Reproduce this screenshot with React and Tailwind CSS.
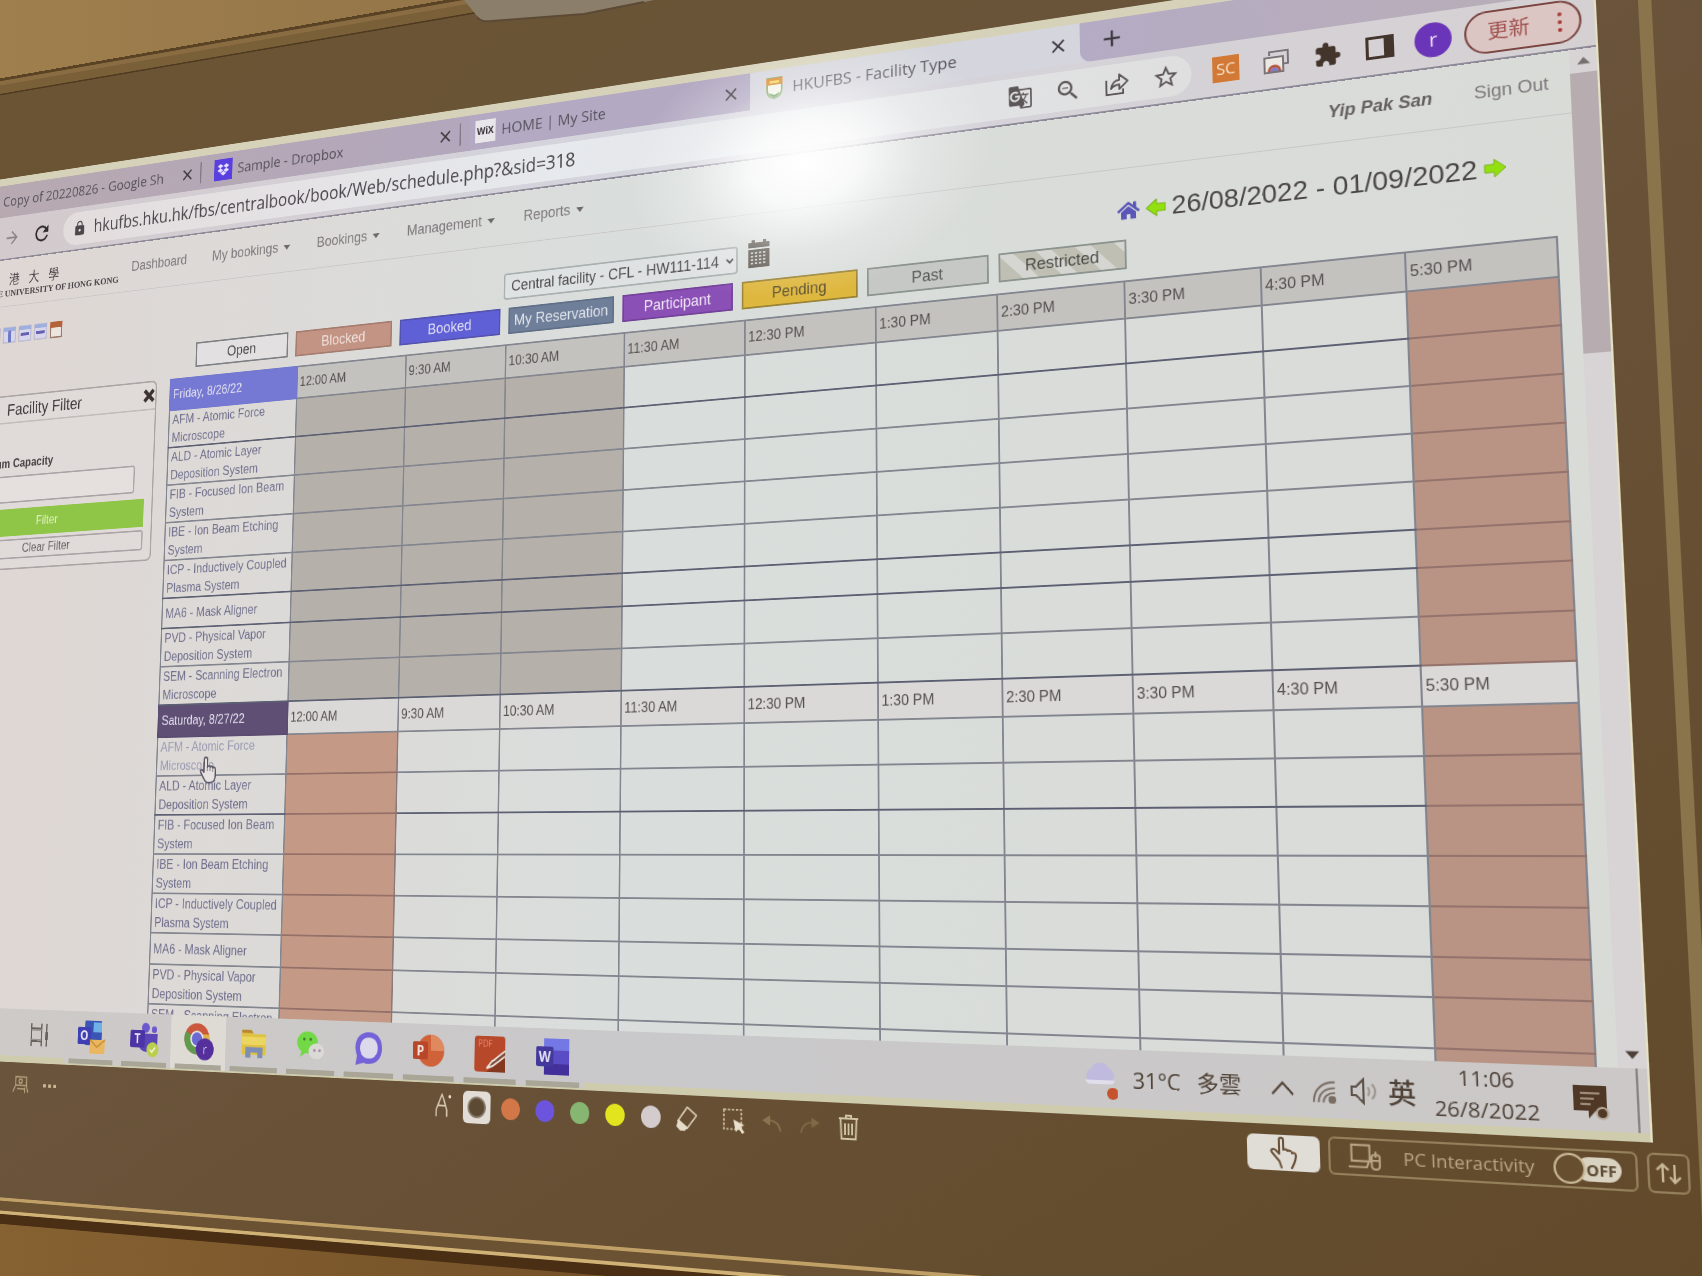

import React, { useEffect, useState } from "react";
import { MdLock, MdRefresh, MdArrowForward, MdArrowBack, MdGTranslate, MdZoomOut, MdStarBorder, MdExtension, MdClose, MdAdd } from "react-icons/md";
import { FaHome, FaDropbox } from "react-icons/fa";
import { Search } from "lucide-react";

const DESIGN_WIDTH = 1702;
const TILT =
  "matrix3d(0.571740, -0.1109137, 0, -0.000130944, -0.0331028, 0.7001262, 0, -0.0000427835, 0, 0, 1, 0, -56.2354, 88.3242, 0, 1)";

function useScale() {
  const [k, setK] = useState(window.innerWidth / DESIGN_WIDTH);
  useEffect(() => {
    const onResize = () => setK(window.innerWidth / DESIGN_WIDTH);
    window.addEventListener("resize", onResize);
    return () => window.removeEventListener("resize", onResize);
  }, []);
  return k;
}

/* ---------- Browser chrome ---------- */

function CrestIcon() {
  return (
    <svg viewBox="0 0 24 28" className="h-7 w-6">
      <path d="M3 2h18v14c0 6-5 9-9 10-4-1-9-4-9-10z" fill="#f1f3e6" stroke="#8aa66c" strokeWidth="2" />
      <path d="M2 2h20v8H2z" fill="#d98a2b" />
      <path d="M6 5h12v3H6z" fill="#f2d35a" />
      <path d="M5 19c2 4 5 5 7 6 2-1 5-2 7-6l-7 3z" fill="#5f9a58" />
    </svg>
  );
}

function Tab({ icon, title, look, divider }) {
  return (
    <div className={"flex items-center pr-3 " + look}>
      <span className="flex w-7 shrink-0 items-center justify-center">{icon}</span>
      <span className="ml-2 whitespace-nowrap">{title}</span>
      <button aria-label={"Close " + title} className="ml-auto text-[#3f3a40]">
        <MdClose size={24} />
      </button>
      {divider && <span className="ml-2 h-7 w-[2px] bg-[#857a86]" />}
    </div>
  );
}

function TabStrip() {
  return (
    <div className="flex h-[54px] items-stretch border-t-[10px] border-[#d6d2ba] bg-gradient-to-r from-[#b8a9af] via-[#b0a6c0] to-[#b9aeb8] text-[19px] text-[#57525c]">
      <Tab divider look="w-[400px] pl-7" title="Copy of 20220826 - Google Sh" icon={<span className="h-5 w-4 bg-[#4f9a62]" />} />
      <Tab
        divider
        look="w-[384px] pl-2"
        title="Sample - Dropbox"
        icon={
          <span className="flex h-7 w-7 items-center justify-center bg-[#5a3fe0] text-[#e9e2ff]">
            <FaDropbox size={18} />
          </span>
        }
      />
      <Tab
        look="w-[370px] rounded-br-xl pl-2 bg-[#b3a9c2]"
        title="HOME | My Site"
        icon={<span className="flex h-7 w-7 items-center justify-center bg-[#e9e6ea] text-[12px] font-bold text-[#3a363c]">WiX</span>}
      />
      <Tab look="w-[386px] bg-[#d5d5dd] pl-4" title="HKUFBS - Facility Type" icon={<CrestIcon />} />
      <div className="flex flex-1 items-center bg-[#d5d5dd]">
        <div className="flex h-full w-full items-center rounded-bl-xl bg-gradient-to-r from-[#b5abc4] to-[#b8aeb6] pl-5">
          <button aria-label="New tab" className="text-[#3f3a40]">
            <MdAdd size={30} />
          </button>
        </div>
      </div>
    </div>
  );
}

function ShareIcon() {
  return (
    <svg viewBox="0 0 28 28" className="h-7 w-7" fill="none" stroke="currentColor" strokeWidth="2">
      <path d="M3 9v16h18v-5" />
      <path d="M8 19c1-6 4-9 9-9V4l9 8-9 8v-5c-4 0-7 1-9 4z" strokeLinejoin="round" />
    </svg>
  );
}

function CardsIcon() {
  return (
    <svg viewBox="0 0 28 28" className="h-7 w-7">
      <path d="M7 7V3h19v14h-4" fill="none" stroke="#7a7276" strokeWidth="2" />
      <rect x="2" y="9" width="19" height="16" fill="#ece8e4" stroke="#7a7276" strokeWidth="2" />
      <path d="M5 24a7 7 0 0 1 14 0h-3a4 4 0 0 0-8 0z" fill="#b5563c" />
      <path d="M8 24a4 4 0 0 1 8 0z" fill="#7f7bc4" />
    </svg>
  );
}

function Toolbar() {
  return (
    <div className="flex h-[59px] items-center border-b-2 border-[#8f8a98] bg-gradient-to-r from-[#d2c9cb] via-[#d5d5de] to-[#d5d0d2] pr-3 text-[#4d474c]">
      <button aria-label="Back" className="ml-4 w-7"><MdArrowBack size={28} /></button>
      <button aria-label="Forward" className="ml-6 w-7 text-[#8b8487]"><MdArrowForward size={28} /></button>
      <button aria-label="Reload" className="ml-5 w-8 text-[#2f2a2d]"><MdRefresh size={32} /></button>
      <div className="ml-5 flex h-11 w-[1491px] items-center rounded-full bg-gradient-to-r from-[#e3dcdd] via-[#e6e9ed] to-[#dfdfdf] pl-4 pr-3">
        <MdLock size={22} />
        <input
          aria-label="Address"
          defaultValue="hkufbs.hku.hk/fbs/centralbook/book/Web/schedule.php?&sid=318"
          className="ml-3 min-w-0 flex-1 bg-transparent text-[23px] text-[#4a454a] outline-none"
        />
        <div className="flex gap-6 text-[#5d5659]">
          <button aria-label="Translate"><MdGTranslate size={28} /></button>
          <button aria-label="Zoom"><MdZoomOut size={30} /></button>
          <button aria-label="Share"><ShareIcon /></button>
          <button aria-label="Bookmark"><MdStarBorder size={30} /></button>
        </div>
      </div>
      <div className="ml-[22px] flex items-center gap-6">
        <span className="flex h-7 w-7 items-center justify-center bg-[#d27a35] text-[17px] text-[#f4e3d0]">SC</span>
        <CardsIcon />
        <span className="text-[#43352c]"><MdExtension size={28} /></span>
        <span className="box-border h-6 w-7 border-[3px] border-r-[10px] border-[#43352c]" />
        <span className="-ml-1 flex h-9 w-9 items-center justify-center rounded-full bg-[#6a35b8] text-[20px] text-[#e8dcf4]">r</span>
      </div>
      <button className="ml-3 flex h-11 flex-1 items-center justify-between rounded-full border-2 border-[#7a4440] bg-[#dcc6c4] pl-5 pr-4 text-[20px] text-[#a0524e]">
        更新
        <span className="flex flex-col gap-1">
          <i className="h-1 w-1 rounded-full bg-[#a8403c]" />
          <i className="h-1 w-1 rounded-full bg-[#a8403c]" />
          <i className="h-1 w-1 rounded-full bg-[#a8403c]" />
        </span>
      </button>
    </div>
  );
}

/* ---------- Booking page ---------- */

function SiteNav() {
  const items = ["My bookings", "Bookings", "Management", "Reports"];
  return (
    <nav className="flex h-16 items-center border-b border-[#c8c6c7] text-[18px] text-[#7d787c]">
      <a href="#home" className="flex w-[262px] flex-col items-end pt-2 font-['Liberation_Serif','Noto_Sans_CJK_TC',serif] text-[#4a4448]">
        <span className="mr-[98px] flex gap-[15px] text-[18px] leading-5">
          <span>港</span><span>大</span><span>學</span>
        </span>
        <span className="whitespace-nowrap text-[13px] font-bold leading-4">THE UNIVERSITY OF HONG KONG</span>
      </a>
      <div className="ml-5 flex gap-[39px]">
        <a href="#dashboard">Dashboard</a>
        {items.map((t) => (
          <a key={t} href={"#" + t} className="flex items-center gap-2">
            {t}
            <svg viewBox="0 0 10 6" className="h-[6px] w-[10px]"><path d="M0 0h10L5 6z" fill="#6d686c" /></svg>
          </a>
        ))}
      </div>
      <div className="ml-auto flex gap-10 pr-5">
        <a href="#profile" className="font-bold italic text-[#66615f]">Yip Pak San</a>
        <a href="#signout">Sign Out</a>
      </div>
    </nav>
  );
}

function ViewIcon({ kind }) {
  if (kind === "cal")
    return (
      <svg viewBox="0 0 22 22" className="h-[22px] w-[22px]">
        <rect x="2" y="1" width="18" height="20" fill="#ece4df" stroke="#9a7a68" strokeWidth="2" />
        <path d="M1 0h20v8H1z" fill="#b4623c" />
      </svg>
    );
  return (
    <svg viewBox="0 0 22 22" className="h-[22px] w-[22px]">
      <rect x="1" y="1" width="20" height="20" fill="#d8d6ea" stroke="#a7a6c4" strokeWidth="1" />
      <path d="M1 1h20v5H1z" fill="#9fb0de" />
      {kind === "v" ? <path d="M9 5h5v16H9z" fill="#6f78c4" /> : <path d="M4 10h14v4H4z" fill="#6560b4" />}
    </svg>
  );
}

function Arrow({ flip }) {
  return (
    <svg viewBox="0 0 22 20" className={flip ? "h-5 w-[22px] rotate-180" : "h-5 w-[22px]"}>
      <path d="M1 6h9V1l11 9-11 9v-5H1z" fill="#93e010" stroke="#7ab51a" strokeWidth="1" strokeLinejoin="round" />
    </svg>
  );
}

function CalendarIcon() {
  return (
    <svg viewBox="0 0 28 34" className="h-[34px] w-7" fill="#5d5750">
      <path d="M1 4h4V1h4v3h10V1h4v3h4v6H1z" />
      <path d="M1 12h26v21H1z" />
      <g stroke="#c9cbc5" strokeWidth="2">
        <path d="M4 16h20M4 20h20M4 24h20M4 28h20" strokeDasharray="3 2" />
      </g>
    </svg>
  );
}

const LEGEND = [
  ["Open", "border-[#7e8084] bg-[#e2e0e0] text-[#4c494c]"],
  ["Blocked", "border-[#a57c70] bg-[#c39384] text-[#efe2dc]"],
  ["Booked", "border-[#5553b0] bg-[#5f60d6] text-[#e0e0f2]"],
  ["My Reservation", "border-[#5f6f86] bg-[#6f7f9a] text-[#e0e4ea]"],
  ["Participant", "border-[#74429a] bg-[#8b50b6] text-[#efe4f5]"],
  ["Pending", "border-[#9b8436] bg-[#deb73e] text-[#5c5030]"],
  ["Past", "border-[#8c9490] bg-[#c6c8c5] text-[#5a5a58]"],
  ["Restricted", "border-[#8c9490] bg-[repeating-linear-gradient(45deg,#c0bfb4_0px,#c0bfb4_18px,#d5d6d1_18px,#d5d6d1_30px)] text-[#4c4c48]"],
];

const TIMES = ["12:00 AM", "9:30 AM", "10:30 AM", "11:30 AM", "12:30 PM", "1:30 PM", "2:30 PM", "3:30 PM", "4:30 PM", "5:30 PM"];
const COLS = ["w-[193px]", "w-[157px]", "w-[138px]", "w-[157px]", "w-[152px]", "w-[157px]", "w-[139px]", "w-[139px]", "w-[142px]", "w-[143px]", "w-[143px]"];
const ROOMS = [
  "AFM - Atomic Force Microscope",
  "ALD - Atomic Layer Deposition System",
  "FIB - Focused Ion Beam System",
  "IBE - Ion Beam Etching System",
  "ICP - Inductively Coupled Plasma System",
  "MA6 - Mask Aligner",
  "PVD - Physical Vapor Deposition System",
  "SEM - Scanning Electron Microscope",
];

function HandCursor() {
  return (
    <svg viewBox="0 0 27 36" className="absolute left-[64px] top-[22px] h-9 w-[27px]">
      <path
        d="M9 3c2 0 3 1 3 3v9c1-2 4-2 4 0 1-1 4-1 4 1 1-1 4-1 4 2v8c0 4-2 8-7 8h-4c-3 0-4-2-6-5l-5-8c-1-2 1-4 3-2l2 2V6c0-2 1-3 2-3z"
        fill="#e6e2e2" stroke="#5b5660" strokeWidth="2" strokeLinejoin="round"
      />
      <path d="M12 15v5M16 16v4M20 17v4" stroke="#5b5660" strokeWidth="1" />
    </svg>
  );
}

function Day({ label, tone, headTone, past, blocked, dark, hovered }) {
  return (
    <tbody>
      <tr className="h-10">
        <th scope="row" className={"border-2 px-1 text-left font-normal leading-5 text-[#e3e0ee] " + tone}>{label}</th>
        {TIMES.map((t) => (
          <th key={t} scope="col" className={"border-2 border-[#83868f] px-[3px] text-left font-normal leading-5 text-[#55504f] " + headTone}>{t}</th>
        ))}
      </tr>
      {ROOMS.map((room, r) => {
        const line = dark.includes(r) ? " border-b-[#5c6072]" : "";
        return (
          <tr key={room} className={room.startsWith("MA6") ? "h-[38px]" : "h-12"}>
            <th scope="row" className={"relative border-2 border-[#83868f] px-1 py-0 text-left font-normal leading-[23px]" + line}>
              <a href={"#" + room.slice(0, 3)} className={hovered === r ? "text-[#9a9bb4]" : "text-[#6f6e8c]"}>{room}</a>
              {hovered === r && <HandCursor />}
            </th>
            {TIMES.map((t, c) => {
              const fill = c < past ? " bg-[#b6b0ab]" : blocked.includes(c) ? (c === 0 ? " bg-[#c49985] border-r-[#8a7a7c] border-b-[#947069]" : " bg-[#b99484] border-b-[#94736c]") : "";
              return <td key={t} className={"border-2 border-[#83868f] p-0" + fill + (fill.includes("border-b") ? "" : line)} />;
            })}
          </tr>
        );
      })}
    </tbody>
  );
}

function Schedule() {
  return (
    <table className="w-[1660px] table-fixed border-collapse text-[16px]">
      <colgroup>{COLS.map((c, i) => <col key={i} className={c} />)}</colgroup>
      <Day label="Friday, 8/26/22" tone="border-[#7479cf] bg-[#7579d3]" headTone="bg-[#c3c2bf]" past={3} blocked={[9]} dark={[0, 4, 5, 7]} />
      <Day label="Saturday, 8/27/22" tone="border-[#5b4b70] bg-[#5f4f74]" headTone="bg-[#dad9d7]" past={0} blocked={[0, 9]} dark={[1]} hovered={0} />
    </table>
  );
}

function FilterPanel() {
  return (
    <form className="w-[330px] rounded-lg border-2 border-[#aaa4a4] bg-[#e0dad8] text-[16px] text-[#4a4446]" onSubmit={(e) => e.preventDefault()}>
      <div className="flex h-9 items-center justify-between border-b-2 border-[#c4bcbb] pl-[85px] text-[22px] text-[#3f3a3d]">
        <h2 className="font-medium">Facility Filter</h2>
        <button aria-label="Close filter" className="text-[#3a3230]">
          <svg viewBox="0 0 20 20" className="h-5 w-5"><path d="M3 3l14 14M17 3L3 17" stroke="currentColor" strokeWidth="5" /></svg>
        </button>
      </div>
      <div className="px-3 pb-3 pt-[42px]">
        <label htmlFor="capacity" className="block pl-3 font-bold leading-6">Minimum Capacity</label>
        <div className="pl-3 pr-4 pt-1">
          <input id="capacity" className="h-9 w-full rounded border-2 border-[#aaa4a6] bg-[#e5dfde]" />
        </div>
        <button className="mt-2 h-9 w-full bg-[#8fc647] pr-2 text-[#e4efc8]">Filter</button>
        <button className="mt-1 h-[26px] w-full rounded border-2 border-[#aaa4a6] pr-2 leading-5 text-[#6a6467]">Clear Filter</button>
      </div>
    </form>
  );
}

function BookingPage() {
  return (
    <div className="flex min-h-0 flex-1 overflow-hidden">
      <div className="min-w-0 flex-1">
        <SiteNav />
        <div className="flex h-[121px]">
          <div className="flex w-[350px] gap-1 pl-[48px] pt-7">
            <ViewIcon kind="v" />
            <ViewIcon kind="v" />
            <ViewIcon kind="h" />
            <ViewIcon kind="h" />
            <ViewIcon kind="cal" />
          </div>
          <div className="w-[1300px] pl-[39px]">
            <div className="flex h-[77px] items-end pb-[10px] pl-[446px]">
              <select aria-label="Schedule" className="h-8 w-[304px] rounded border-2 border-[#a9b0b0] bg-[#dfe2e2] pl-1 text-[18px] text-[#4d4b4c]">
                <option>Central facility - CFL - HW111-114</option>
              </select>
              <button aria-label="Show calendar" className="mb-1 ml-3"><CalendarIcon /></button>
            </div>
            <div className="flex gap-[11px]">
              {LEGEND.map(([t, c]) => (
                <span key={t} className={"flex h-8 w-[140px] items-center justify-center whitespace-nowrap border-2 text-[18px] " + c}>{t}</span>
              ))}
            </div>
          </div>
        </div>
        <div className="flex items-start">
          <FilterPanel />
          <div className="ml-5"><Schedule /></div>
        </div>
      </div>
      <div className="flex w-[25px] flex-col items-center bg-[#d8d3d5]">
        <svg viewBox="0 0 12 7" className="mt-2 h-2 w-3"><path d="M0 7h12L6 0z" fill="#77706f" /></svg>
        <div className="mt-2 h-[280px] w-full bg-[#b7acaf]" />
        <svg viewBox="0 0 12 7" className="mb-2 mt-auto h-2 w-3"><path d="M0 0h12L6 7z" fill="#4d413a" /></svg>
      </div>
    </div>
  );
}

function DateRange() {
  return (
    <div className="absolute right-[87px] top-[203px] flex items-center gap-[6px] text-[28px] leading-10 text-[#4a4745]">
      <button aria-label="Today" className="text-[#5a57b8]"><FaHome size={24} /></button>
      <button aria-label="Previous week"><Arrow flip /></button>
      <span>26/08/2022 - 01/09/2022</span>
      <button aria-label="Next week"><Arrow /></button>
    </div>
  );
}

/* ---------- Taskbar ---------- */

const appIcons = {
  start: <svg viewBox="0 0 32 32" className="h-7 w-8"><path d="M2 2h13v13H2zM17 2h13v13H17zM2 17h13v13H2zM17 17h13v13H17z" fill="#5a5450" /></svg>,
  search: <Search size={28} color="#5a5450" />,
  tasks: (
    <svg viewBox="0 0 32 32" className="h-8 w-8" fill="none" stroke="#6a625c" strokeWidth="2">
      <path d="M3 2v28M19 2v28M3 8h16M3 24h16" /><path d="M3 10h16M3 22h16" stroke="#9a928c" /><path d="M27 2v10M27 22v8" /><path d="M27 12v10" strokeWidth="4" />
    </svg>
  ),
  outlook: (
    <svg viewBox="0 0 44 44" className="h-11 w-11">
      <rect x="12" y="2" width="26" height="30" rx="2" fill="#3a55b4" /><rect x="25" y="4" width="13" height="12" fill="#6fb0e6" />
      <rect x="1" y="10" width="21" height="21" rx="2" fill="#3f3fb4" />
      <text x="11" y="26" textAnchor="middle" fontSize="16" fontWeight="700" fill="#e4e4f6">O</text>
      <path d="M20 25h23v17H20z" fill="#eab660" /><path d="M20 25l11 9 12-9" fill="none" stroke="#c8903c" strokeWidth="2" />
    </svg>
  ),
  teams: (
    <svg viewBox="0 0 44 44" className="h-11 w-11">
      <circle cx="24" cy="8" r="6" fill="#6a58cc" /><circle cx="37" cy="10" r="4" fill="#6a58cc" />
      <path d="M14 15h28v14c0 9-26 12-28 0z" fill="#5b46b8" /><rect x="1" y="11" width="22" height="21" rx="2" fill="#4c34a4" />
      <text x="12" y="27" textAnchor="middle" fontSize="16" fontWeight="700" fill="#e6e2f6">T</text>
      <circle cx="35" cy="34" r="9" fill="#b9cf4c" /><path d="M31 34l3 3 5-6" fill="none" stroke="#f0f3d8" strokeWidth="2" />
    </svg>
  ),
  chrome: (
    <svg viewBox="0 0 44 44" className="h-12 w-12">
      <circle cx="20" cy="19" r="17" fill="#c9583c" />
      <path d="M20 19L5 11a17 17 0 0 0 15 25z" fill="#5f9a4e" /><path d="M20 36a17 17 0 0 0 16-22H20z" fill="#dfb548" />
      <circle cx="20" cy="19" r="9" fill="#efeae8" /><circle cx="20" cy="19" r="7" fill="#6a6ad2" />
      <circle cx="31" cy="30" r="12" fill="#55309c" /><text x="31" y="35" textAnchor="middle" fontSize="14" fill="#cfc0e6">r</text>
    </svg>
  ),
  explorer: (
    <svg viewBox="0 0 44 44" className="h-10 w-11">
      <path d="M3 4h15l4 5h19v27H3z" fill="#e0c243" /><path d="M3 4h15l3 4H3z" fill="#b8862e" />
      <path d="M3 13h38v10H3z" fill="#ecd662" /><path d="M9 40V26h27v14h-8v-7H17v7z" fill="#7d8fb4" />
    </svg>
  ),
  wechat: (
    <svg viewBox="0 0 44 44" className="h-10 w-11">
      <ellipse cx="17" cy="17" rx="16" ry="14" fill="#72d846" /><path d="M8 28l-2 8 9-6z" fill="#72d846" />
      <ellipse cx="31" cy="28" rx="12" ry="10" fill="#dadad4" />
      <circle cx="12" cy="13" r="2" fill="#3e7a2a" /><circle cx="22" cy="13" r="2" fill="#3e7a2a" />
      <circle cx="28" cy="27" r="2" fill="#b08ab0" /><circle cx="36" cy="27" r="2" fill="#b08ab0" />
    </svg>
  ),
  chat: (
    <svg viewBox="0 0 44 44" className="h-11 w-11">
      <path d="M22 3c12 0 18 8 18 18S34 39 22 39c-3 0-5 0-7-1l-11 3 2-11C-1 16 7 3 22 3z" fill="#7463d8" />
      <path d="M22 9c8 0 12 5 12 12s-4 12-12 12-12-5-12-12S14 9 22 9z" fill="#dcd9ea" />
    </svg>
  ),
  ppt: (
    <svg viewBox="0 0 44 44" className="h-11 w-11">
      <circle cx="25" cy="21" r="18" fill="#cf6238" /><path d="M25 3a18 18 0 0 1 18 18H25z" fill="#e0895e" />
      <rect x="1" y="11" width="20" height="20" rx="2" fill="#b8472a" />
      <text x="11" y="27" textAnchor="middle" fontSize="16" fontWeight="700" fill="#f4e0d8">P</text>
    </svg>
  ),
  pdf: (
    <svg viewBox="0 0 44 44" className="h-11 w-11">
      <rect x="2" y="2" width="40" height="40" rx="4" fill="#b8482a" /><path d="M18 42h24V20z" fill="#843820" />
      <text x="16" y="14" textAnchor="middle" fontSize="10" fill="#e68a78">PDF</text>
      <path d="M42 18L24 31l-6 7 8-3 16-11" fill="#7c4a38" stroke="#ece2dc" strokeWidth="2" />
    </svg>
  ),
  word: (
    <svg viewBox="0 0 44 44" className="h-11 w-11">
      <rect x="11" y="2" width="32" height="40" rx="2" fill="#5a4cc4" /><path d="M11 2h32v13H11z" fill="#7478e4" /><path d="M11 30h32v12H11z" fill="#43309a" />
      <rect x="1" y="11" width="22" height="22" rx="2" fill="#43389c" />
      <text x="12" y="28" textAnchor="middle" fontSize="16" fontWeight="700" fill="#e4e2f6">W</text>
    </svg>
  ),
};

function Taskbar() {
  const apps = ["search", "tasks", "outlook", "teams", "chrome", "explorer", "wechat", "chat", "ppt", "pdf", "word"];
  return (
    <div className="flex h-[66px] items-stretch bg-gradient-to-r from-[#cfcac7] via-[#c9c8ca] to-[#cbc8c7] text-[#4f4238]">
      <button aria-label="start" className="flex w-[63px] items-center justify-center border-b-8 border-[#cfccae]">{appIcons.start}</button>
      {apps.map((a) => (
        <button
          key={a}
          aria-label={a}
          className={
            a === "chrome"
              ? "flex w-[81px] flex-col items-center justify-between border-b-2 border-[#cfccae] bg-[#dedad4]"
              : "flex w-[81px] flex-col items-center justify-between border-b-2 border-[#cfccae]"
          }
        >
          <span className="flex flex-1 items-center pt-1">{appIcons[a]}</span>
          <span className={a === "search" || a === "tasks" ? "h-[6px] w-full bg-[#cfccae]" : "h-[6px] w-[68px] bg-[#a9a698]"} />
        </button>
      ))}
      <div className="flex flex-1 items-center justify-end border-b-8 border-[#cfccae]">
        <svg viewBox="0 0 36 40" className="mt-1 h-10 w-9">
          <path d="M8 22a7 7 0 0 1 1-13 10 10 0 0 1 18-1 8 8 0 0 1 2 14z" fill="#bfbade" /><path d="M3 20h30c0 2-2 4-5 4H8c-3 0-5-2-5-4z" fill="#e0deea" />
          <circle cx="31" cy="33" r="6" fill="#c4532e" />
        </svg>
        <span className="ml-4 flex gap-4 whitespace-nowrap text-[22px]"><span>31°C</span><span>多雲</span></span>
        <button aria-label="Hidden icons" className="ml-7 mt-1">
          <svg viewBox="0 0 24 16" className="h-4 w-6" fill="none" stroke="currentColor" strokeWidth="2"><path d="M2 14L12 3l10 11" /></svg>
        </button>
        <svg viewBox="0 0 26 26" className="ml-4 mt-2 h-7 w-6" fill="none" stroke="#7a6e64" strokeWidth="2">
          <path d="M2 24C2 11 11 3 24 3M7 24c0-9 7-15 17-15M12 24c0-6 5-10 12-10" /><circle cx="21" cy="21" r="3" fill="#7a6e64" />
        </svg>
        <svg viewBox="0 0 28 26" className="ml-3 mt-1 h-7 w-7" fill="none" stroke="#5c5048" strokeWidth="2">
          <path d="M2 9h4l7-7v22l-7-7H2z" /><path d="M17 9c2 2 2 6 0 8M21 6c4 4 4 10 0 14" stroke="#a0978f" />
        </svg>
        <span className="ml-2 mt-1 text-[26px] font-medium">英</span>
        <div className="ml-3 mr-1 w-[104px] text-center text-[20px] leading-[29px]">
          <div>11:06</div>
          <div>26/8/2022</div>
        </div>
        <svg viewBox="0 0 32 36" className="ml-5 mt-2 h-9 w-8">
          <path d="M1 2h29v23H20l-6 7v-7H1z" fill="#4f3826" /><path d="M7 9h17M7 14h12M7 19h9" stroke="#9d8a78" strokeWidth="2" />
          <circle cx="26" cy="27" r="5" fill="#4f3826" stroke="#b8aa9c" strokeWidth="2" />
        </svg>
        <span className="ml-6 mr-2 h-full w-[2px] bg-[#8a8480]" />
      </div>
    </div>
  );
}

/* ---------- Whiteboard tools under the screen ---------- */

function Swatch({ tone, label }) {
  return (
    <button aria-label={label} className="flex w-11 justify-center">
      <span className={"h-6 w-6 rounded-full " + tone} />
    </button>
  );
}

function BoardTools() {
  return (
    <div className="flex h-[54px] w-[2087px] items-center text-[#c9b895]">
      <svg viewBox="0 0 32 28" className="ml-[142px] h-6 w-8" fill="none" stroke="#b5a27e" strokeWidth="2">
        <path d="M7 3h20v12H7zM2 25l5-10h20l3 10M10 20h14M24 18v8" /><circle cx="16" cy="9" r="3" />
      </svg>
      <span className="ml-5 flex gap-1">
        <i className="h-1 w-1 bg-[#c9b895]" /><i className="h-1 w-1 bg-[#c9b895]" /><i className="h-1 w-1 bg-[#c9b895]" />
      </span>
      <div className="mb-1 ml-[537px] flex items-center">
        <button aria-label="Pen" className="flex w-11 justify-center">
          <svg viewBox="0 0 24 30" className="h-7 w-6" fill="none" stroke="#d8cab0" strokeWidth="2">
            <path d="M2 28V20L8 6l2-4 2 4 5 14v8M5 15h10" /><circle cx="21" cy="4" r="2" fill="#e8dcc4" stroke="none" />
          </svg>
        </button>
        <button aria-label="Black" className="flex w-11 justify-center">
          <span className="flex h-9 w-9 items-center justify-center rounded-md bg-[#e2ddd6]"><span className="h-6 w-6 rounded-full border-2 border-[#8a7c6c] bg-[#5c4a35]" /></span>
        </button>
        <Swatch label="Orange" tone="bg-[#d27748]" />
        <Swatch label="Blue" tone="bg-[#6c55dc]" />
        <Swatch label="Green" tone="bg-[#86b671]" />
        <Swatch label="Yellow" tone="bg-[#e2e41e]" />
        <Swatch label="White" tone="bg-[#d4cbcc]" />
        <button aria-label="Eraser" className="flex w-11 justify-center">
          <svg viewBox="0 0 30 30" className="h-7 w-7">
            <path d="M15 2l12 9-12 15-12-8z" fill="none" stroke="#d9ccb2" strokeWidth="2" strokeLinejoin="round" /><path d="M4 16l12 9-4 4H6l-5-5z" fill="#e4dbc8" />
          </svg>
        </button>
        <button aria-label="Select area" className="ml-3 flex w-11 justify-center">
          <svg viewBox="0 0 30 30" className="h-7 w-7"><rect x="2" y="2" width="22" height="22" fill="none" stroke="#cdbf9f" strokeWidth="2" strokeDasharray="3 2" /><path d="M14 13l14 6-5 2 5 6-3 2-4-6-4 4z" fill="#eae0cc" /></svg>
        </button>
        <button aria-label="Undo" className="flex w-11 justify-center text-[#8a7450]">
          <svg viewBox="0 0 26 20" className="h-5 w-6" fill="currentColor"><path d="M1 7l10-6v12z" /><path d="M8 7c9-1 15 4 16 12" fill="none" stroke="currentColor" strokeWidth="2" /></svg>
        </button>
        <button aria-label="Redo" className="flex w-11 justify-center text-[#7f6946]">
          <svg viewBox="0 0 26 20" className="h-5 w-6" fill="currentColor"><path d="M25 7L15 1v12z" /><path d="M18 7C9 6 3 11 2 19" fill="none" stroke="currentColor" strokeWidth="2" /></svg>
        </button>
        <button aria-label="Delete all" className="flex w-11 justify-center">
          <svg viewBox="0 0 24 28" className="h-7 w-6" fill="none" stroke="#d2c5a8" strokeWidth="2"><path d="M1 5h22M9 5V2h6v3M3 6l1 20h16l1-20M8 10v12M12 10v12M16 10v12" /></svg>
        </button>
      </div>
      <button aria-label="Touch mode" className="ml-auto flex h-[34px] w-[70px] items-center justify-center rounded-md bg-[#e0ddd6]">
        <svg viewBox="0 0 28 32" className="h-8 w-7" fill="none" stroke="#6a5038" strokeWidth="2" strokeLinejoin="round" strokeLinecap="round">
          <path d="M12 30l-2-6-7-8c-2-2 1-5 4-2l3 3V4c0-3 4-3 4 0v9c2-1 4 0 4 1 2-1 4 0 4 2 2-1 4 0 4 2 0 5-2 8-4 12" />
        </svg>
      </button>
      <label className="ml-2 flex h-9 w-[278px] items-center rounded-md border-2 border-[#94805a] pl-4 pr-3 text-[17px] text-[#b9a684]">
        <svg viewBox="0 0 34 28" className="h-7 w-8 shrink-0" fill="none" stroke="#b9a684" strokeWidth="2"><path d="M4 2h18v16H4zM1 24h18l2-5M24 14c0-4 8-4 8 0v8c0 5-8 5-8 0zM28 8v6M24 17h8" /></svg>
        <span className="ml-5 whitespace-nowrap">PC Interactivity</span>
        <input type="checkbox" className="sr-only" />
        <span className="ml-auto flex h-6 items-center">
          <i className="z-10 -mr-2 h-7 w-7 rounded-full border-2 border-[#c9b895] bg-[#664e2e]" />
          <span className="flex h-[22px] items-center rounded-full bg-[#d9d2c0] pl-2 pr-1 text-[14px] font-bold not-italic text-[#5c4a33]">OFF</span>
        </span>
      </label>
      <button aria-label="Swap" className="ml-2 flex h-9 w-9 items-center justify-center rounded-md border-2 border-[#94805a]">
        <svg viewBox="0 0 24 24" className="h-6 w-6" fill="none" stroke="#c9b895" strokeWidth="2"><path d="M7 20V4M2 9l5-5 5 5M17 4v16M13 15l4 5 5-5" /></svg>
      </button>
    </div>
  );
}

export default function App() {
  const k = useScale();
  return (
    <main className="relative h-screen w-full overflow-hidden bg-gradient-to-r from-[#9f7f4d] to-[#745b3a] font-['Liberation_Sans','Noto_Sans_CJK_TC',sans-serif]">
      <div className="h-0 w-0" style={{ transform: `scale(${k})`, transformOrigin: "0 0" }}>
        <div className="w-[2300px] origin-top-left" style={{ transform: TILT }}>
          <div className="h-1 bg-[#5a4225]" />
          <div className="h-[6px] bg-[#8a6c42]" />
          <div className="h-3 bg-[#7a6038]" />
          <div className="flex border-t-2 border-[#4d3a20] bg-gradient-to-br from-[#6a5432] via-[#6a543b] to-[#614828]">
            <div className="flex flex-col pl-[50px] pt-[118px]">
              <div className="relative flex aspect-video w-[2057px] flex-col overflow-hidden border-r-2 border-[#e6e0c4] bg-gradient-to-r from-[#dfd6d3] via-[#d9dedc] to-[#d9dbd7]">
                <div className="font-['Open_Sans','Noto_Sans_CJK_TC',sans-serif]">
                  <TabStrip />
                  <Toolbar />
                </div>
                <BookingPage />
                <DateRange />
                <div className="font-['Open_Sans','Noto_Sans_CJK_TC',sans-serif]"><Taskbar /></div>
                <div className="pointer-events-none absolute left-[1000px] top-[-30px] h-[310px] w-[440px] bg-[radial-gradient(closest-side,#ffffff_0%,#ffffffd0_30%,#ffffff40_65%,#ffffff00_100%)]" />
              </div>
              <div className="font-['Open_Sans',sans-serif]"><BoardTools /></div>
              <div className="h-[112px]" />
            </div>
            <div className="ml-2 w-3 bg-[#8a744c]" />
          </div>
          <div className="h-1 bg-[#c0a066]" />
          <div className="h-3 bg-[#6b5232]" />
          <div className="h-1 bg-[#d0b276]" />
          <div className="h-3 bg-[#4a2f14]" />
          <div className="h-[200px] bg-gradient-to-r from-[#8a6534] to-[#5a3a1a]" />
        </div>
        <svg viewBox="0 0 200 26" className="absolute left-[464px] top-0 h-[26px] w-[200px]">
          <path d="M0 0h190L120 14 28 21c-8 1-12-1-15-5z" fill="#8b7f6c" />
          <path d="M13 17c3 4 7 5 15 4l92-7 60-12" fill="none" stroke="#5c4a35" strokeWidth="2" />
        </svg>
      </div>
    </main>
  );
}
